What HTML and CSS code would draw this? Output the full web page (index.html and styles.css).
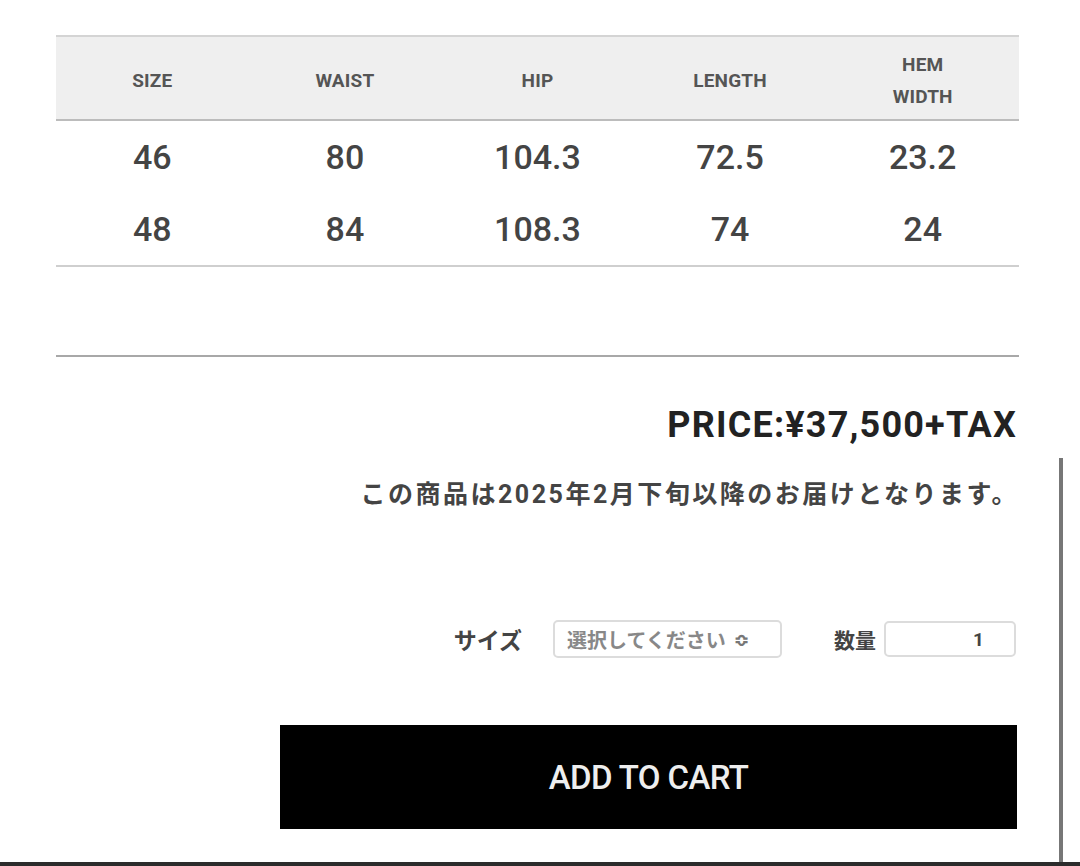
FILE: index.html
```html
<!DOCTYPE html>
<html lang="ja">
<head>
<meta charset="utf-8">
<title>Size chart</title>
<link rel="stylesheet" href="styles.css">
</head>
<body>
<div class="frame">
  <div class="content">
    <table class="sizes">
      <thead>
        <tr>
          <th>SIZE</th>
          <th>WAIST</th>
          <th>HIP</th>
          <th>LENGTH</th>
          <th>HEM<br>WIDTH</th>
        </tr>
      </thead>
      <tbody>
        <tr><td>46</td><td>80</td><td>104.3</td><td>72.5</td><td>23.2</td></tr>
        <tr><td>48</td><td>84</td><td>108.3</td><td>74</td><td>24</td></tr>
      </tbody>
    </table>
    <div class="rule"></div>
    <div class="price">PRICE:¥37,500+TAX</div>
    <div class="note">この商品は<b>2025</b>年<b>2</b>月下旬以降のお届けとなります。</div>
    <div class="options">
      <span class="label">サイズ</span>
      <div class="select">選択してください <span class="arrows">≎</span></div>
      <span class="label qty-label">数量</span>
      <div class="qty">1</div>
    </div>
    <div class="cart-row">
      <button class="cart">ADD TO CART</button>
    </div>
  </div>
  <div class="scrollbar"></div>
</div>
</body>
</html>
```

FILE: styles.css
```css
html, body {
  margin: 0;
  padding: 0;
  background: #fff;
}
body {
  font-family: "Roboto", "Noto Sans CJK JP", sans-serif;
  color: #444;
}
.frame {
  position: relative;
  height: 862px;
  border-bottom: 4px solid #2b2b2b;
  overflow: hidden;
}
.content {
  width: 963px;
  margin-left: 56px;
  padding-top: 35px;
}
.sizes {
  width: 100%;
  border-collapse: collapse;
  table-layout: fixed;
}
.sizes thead tr {
  background: #efefef;
  border-top: 2px solid #d4d4d4;
  border-bottom: 2px solid #bcbcbc;
}
.sizes th {
  height: 84px;
  padding: 6px 0 0;
  box-sizing: border-box;
  font-size: 19px;
  font-weight: 700;
  line-height: 32px;
  color: #555;
  letter-spacing: 0.2px;
}
.sizes tbody tr:last-child {
  border-bottom: 2px solid #cfcfcf;
}
.sizes td {
  height: 72px;
  padding: 0;
  text-align: center;
  font-size: 34px;
  font-weight: 500;
  color: #444;
}
.rule {
  margin-top: 88px;
  height: 2px;
  background: #a8a8a8;
}
.price {
  margin-top: 47px;
  text-align: right;
  padding-right: 2px;
  font-size: 36px;
  font-weight: 700;
  color: #222;
  letter-spacing: 1.2px;
}
.note {
  margin-top: 28px;
  text-align: right;
  padding-right: 0;
  font-size: 25px;
  font-weight: 700;
  color: #444;
  letter-spacing: 2.5px;
}
.note b {
  font-weight: 700;
}
.options {
  margin-top: 110px;
  display: flex;
  justify-content: flex-end;
  align-items: center;
  padding-right: 3px;
}
.label {
  font-size: 23px;
  font-weight: 700;
  color: #444;
}
.select {
  margin-left: 31px;
  width: 229px;
  height: 38px;
  box-sizing: border-box;
  border: 2px solid #dcdcdc;
  border-radius: 5px;
  display: flex;
  align-items: center;
  padding-left: 12px;
  font-size: 20px;
  font-weight: 700;
  color: #888;
}
.arrows {
  margin-left: 8px;
  font-size: 18px;
  color: #777;
}
.qty-label {
  margin-left: 52px;
  font-size: 21px;
}
.qty {
  margin-left: 8px;
  width: 132px;
  height: 36px;
  box-sizing: border-box;
  border: 2px solid #dcdcdc;
  border-radius: 5px;
  display: flex;
  align-items: center;
  justify-content: flex-end;
  padding-right: 30px;
  font-size: 19px;
  font-weight: 700;
  color: #444;
}
.cart-row {
  margin-top: 67px;
  display: flex;
  justify-content: flex-end;
  padding-right: 2px;
}
.cart {
  width: 737px;
  height: 104px;
  background: #000;
  border: none;
  color: #eee;
  font-family: "Roboto", sans-serif;
  font-size: 33px;
  font-weight: 500;
  letter-spacing: -0.6px;
  padding: 0;
}
.scrollbar {
  position: absolute;
  left: 1059px;
  top: 458px;
  width: 4px;
  bottom: 0;
  background: #777;
}
```
